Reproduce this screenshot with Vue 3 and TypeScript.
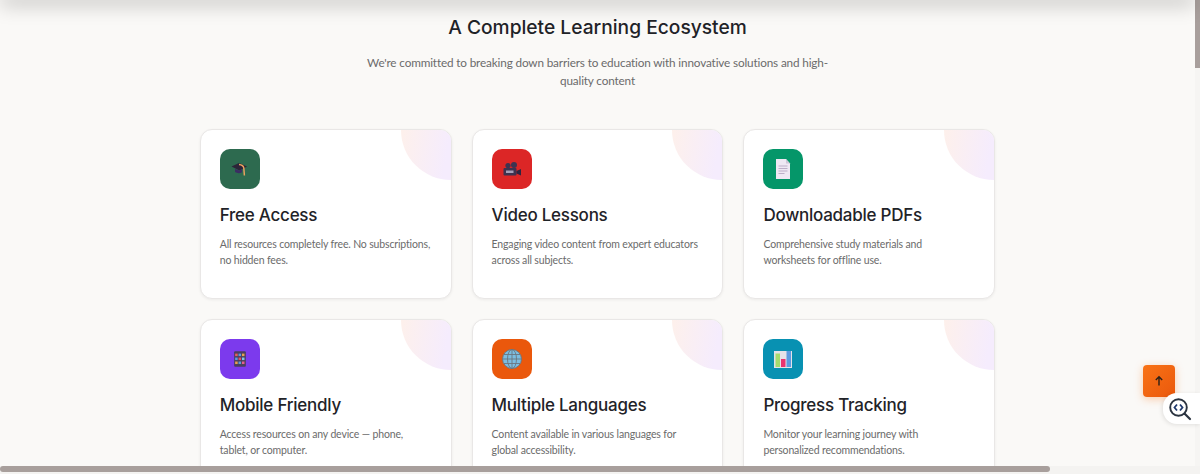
<template>
  <div class="page">
    <div class="topbar"></div>

    <div class="content">
      <section class="features">
        <h2 class="title">A Complete Learning Ecosystem</h2>
        <p class="lead">We're committed to breaking down barriers to education with innovative solutions and high-quality content</p>

        <div class="grid">
          <article v-for="card in cards" :key="card.title" class="card">
            <div class="corner"></div>
            <div class="icon" :style="{ background: card.color }">
              <svg v-if="card.icon === 'cap'" viewBox="0 0 20 20" width="20" height="20">
                <path d="M1.500 7.500 9 4l8 3.500-7.500 4z" fill="#2c2438" />
                <path d="M5 10v3c2 1.500 5 1.500 7 .2V10l-2.500 1.500z" fill="#3b2d63" />
                <path d="M9 5.500c3 .4 4.500 1.500 4.800 3.500l.6 7.500" fill="none" stroke="#e9a15f" stroke-width="1.500" />
              </svg>
              <svg v-else-if="card.icon === 'camera'" viewBox="0 0 20 20" width="20" height="20">
                <circle cx="6" cy="6.500" r="2.600" fill="#3d3350" />
                <circle cx="12" cy="6" r="3" fill="#3d3350" />
                <rect x="1.500" y="9" width="13" height="7.500" rx="1" fill="#3d3350" />
                <path d="M14.500 12 19 10v6.500l-4.500-2z" fill="#2d2540" />
                <rect x="4" y="11.500" width="7.500" height="2.500" fill="#a6a0b8" />
              </svg>
              <svg v-else-if="card.icon === 'doc'" viewBox="0 0 20 20" width="20" height="20">
                <path d="M3 0h10l4 4.500V20H3z" fill="#efe8f4" />
                <path d="M13 0v4.500h4z" fill="#cfc6d8" />
                <path d="M5.500 7h9M5.500 9.500h9M5.500 12h9M5.500 14.500h6" stroke="#bdaec8" stroke-width="1" />
              </svg>
              <svg v-else-if="card.icon === 'phone'" viewBox="0 0 20 20" width="18" height="18">
                <rect x="3.500" y="1.500" width="13" height="17" rx="1" fill="#4a3f5e" />
                <g v-for="(cell, i) in phoneCells" :key="i">
                  <rect :x="cell.x" :y="cell.y" width="2.800" height="2.800" :fill="cell.fill" />
                </g>
              </svg>
              <svg v-else-if="card.icon === 'globe'" viewBox="0 0 20 20" width="20" height="20">
                <circle cx="10" cy="10" r="9.500" fill="#7cbde0" />
                <g fill="none" stroke="#6b7680" stroke-width="0.900">
                  <circle cx="10" cy="10" r="9.500" />
                  <ellipse cx="10" cy="10" rx="4.500" ry="9.500" />
                  <path d="M10 .5v19M.5 10h19M2 5.500h16M2 14.500h16" />
                </g>
              </svg>
              <svg v-else viewBox="0 0 20 20" width="20" height="20">
                <rect x="1" y="2" width="18" height="17" fill="#e4e2e8" />
                <rect x="2.500" y="4.500" width="4.500" height="13.500" fill="#a5dc6e" />
                <rect x="8" y="10" width="4.500" height="8" fill="#e8336f" />
                <rect x="13.500" y="2" width="4.500" height="16" fill="#5b9be0" />
              </svg>
            </div>
            <h3 class="card-title">{{ card.title }}</h3>
            <p class="card-text">{{ card.text }}</p>
          </article>
        </div>
      </section>
    </div>

    <div class="vtrack"><div class="vthumb"></div></div>

    <button class="to-top" aria-label="Back to top">
      <svg viewBox="0 0 12 12" width="12" height="12">
        <path d="M6 10.500V2M2.800 5 6 1.800 9.200 5" fill="none" stroke="#2a2018" stroke-width="1.400" />
      </svg>
    </button>

    <div class="zoom-tab">
      <svg viewBox="0 0 24 24" width="24" height="24">
        <circle cx="10.500" cy="10.500" r="8.300" fill="#fff" stroke="#2b3440" stroke-width="1.900" />
        <path d="M16.500 16.500 22 22" stroke="#2b3440" stroke-width="2.200" stroke-linecap="round" />
        <path d="M9 7.500 6.500 10.500 9 13.500" fill="none" stroke="#1f3a6e" stroke-width="1.800" />
        <path d="M12 7.500l2.500 3-2.500 3" fill="none" stroke="#1f3a6e" stroke-width="1.800" />
      </svg>
    </div>

    <div class="hbar"><div class="hthumb"></div></div>
  </div>
</template>

<script setup lang="ts">
interface Card {
  title: string
  text: string
  color: string
  icon: string
}

const cards: Card[] = [
  { title: 'Free Access', text: 'All resources completely free. No subscriptions, no hidden fees.', color: '#2d6a4f', icon: 'cap' },
  { title: 'Video Lessons', text: 'Engaging video content from expert educators across all subjects.', color: '#dc2626', icon: 'camera' },
  { title: 'Downloadable PDFs', text: 'Comprehensive study materials and worksheets for offline use.', color: '#059669', icon: 'doc' },
  { title: 'Mobile Friendly', text: 'Access resources on any device — phone, tablet, or computer.', color: '#7c3aed', icon: 'phone' },
  { title: 'Multiple Languages', text: 'Content available in various languages for global accessibility.', color: '#ea580c', icon: 'globe' },
  { title: 'Progress Tracking', text: 'Monitor your learning journey with personalized recommendations.', color: '#0891b2', icon: 'chart' }
]

const cellColors = ['#e85d5d', '#5b9be0', '#e8a04d', '#5b9be0', '#e8505d', '#7dc4e8', '#e8a04d', '#5b9be0', '#e85d8d']
const phoneCells = cellColors.map((fill, i) => ({
  fill,
  x: 4.6 + (i % 3) * 3.8,
  y: 4 + Math.floor(i / 3) * 4.4
}))
</script>

<style scoped>
.page {
  position: relative;
  display: flex;
  width: 1200px;
  height: 474px;
  overflow: hidden;
  background: #faf9f7;
  font-family: Lato, "Open Sans", sans-serif;
}

.topbar {
  position: absolute;
  top: -10px;
  left: 0;
  width: 1195px;
  height: 10px;
  box-shadow: 0 4px 20px rgba(0, 0, 0, 0.28);
}

.content {
  flex: 1;
  min-width: 0;
}

.features {
  display: flex;
  flex-direction: column;
  align-items: center;
  padding-top: 13px;
}

.title {
  margin: 0;
  font-family: Inter, sans-serif;
  font-size: 19.2px;
  line-height: 28px;
  font-weight: 500;
  color: #1f2328;
}

.lead {
  width: 480px;
  margin: 13px 0 0;
  font-size: 11.75px;
  line-height: 18px;
  letter-spacing: -0.15px;
  text-align: center;
  color: #6b6b6b;
}

.grid {
  display: grid;
  grid-template-columns: repeat(3, 1fr);
  grid-auto-rows: 170px;
  gap: 20px;
  width: 795.5px;
  margin-top: 39px;
}

.card {
  position: relative;
  box-sizing: border-box;
  padding: 19px;
  overflow: hidden;
  background: #fff;
  border: 1px solid #e9e7e6;
  border-radius: 12px;
  box-shadow: 0 1px 3px rgba(0, 0, 0, 0.06);
}

.corner {
  position: absolute;
  top: -50px;
  right: -50px;
  width: 100px;
  height: 100px;
  border-radius: 50%;
  background: linear-gradient(100deg, #fff1e8 0%, #f5ecfd 50%);
}

.icon {
  display: flex;
  align-items: center;
  justify-content: center;
  width: 40px;
  height: 40px;
  border-radius: 10px;
}

.card-title {
  margin: 14px 0 0;
  font-family: Inter, sans-serif;
  font-size: 17px;
  line-height: 24px;
  font-weight: 500;
  letter-spacing: -0.25px;
  color: #1f2328;
}

.card-text {
  margin: 9px 0 0;
  font-size: 10.5px;
  line-height: 16px;
  letter-spacing: -0.15px;
  color: #6b6b6b;
}

.vtrack {
  width: 5px;
  background: #f6f5f3;
}

.vthumb {
  width: 5px;
  height: 68px;
  background: #a89f9c;
}

.to-top {
  position: absolute;
  left: 1143px;
  top: 365px;
  display: flex;
  align-items: center;
  justify-content: center;
  width: 32px;
  height: 32px;
  padding: 0;
  border: none;
  border-radius: 4px;
  background: linear-gradient(135deg, #f97316, #ea580c);
  box-shadow: 0 2px 8px rgba(249, 115, 22, 0.35);
}

.zoom-tab {
  position: absolute;
  left: 1163px;
  top: 393px;
  display: flex;
  align-items: center;
  justify-content: flex-start;
  box-sizing: border-box;
  width: 37px;
  height: 31px;
  padding-left: 5px;
  background: #fff;
  border-radius: 14px 0 0 14px;
  box-shadow: -1px 1px 4px rgba(0, 0, 0, 0.1);
}

.hbar {
  position: absolute;
  left: 0;
  bottom: 0;
  width: 100%;
  height: 8px;
  background: #f4f3f1;
}

.hthumb {
  width: 1050px;
  height: 6px;
  background: #a89f9c;
  border-radius: 3px;
}
</style>
